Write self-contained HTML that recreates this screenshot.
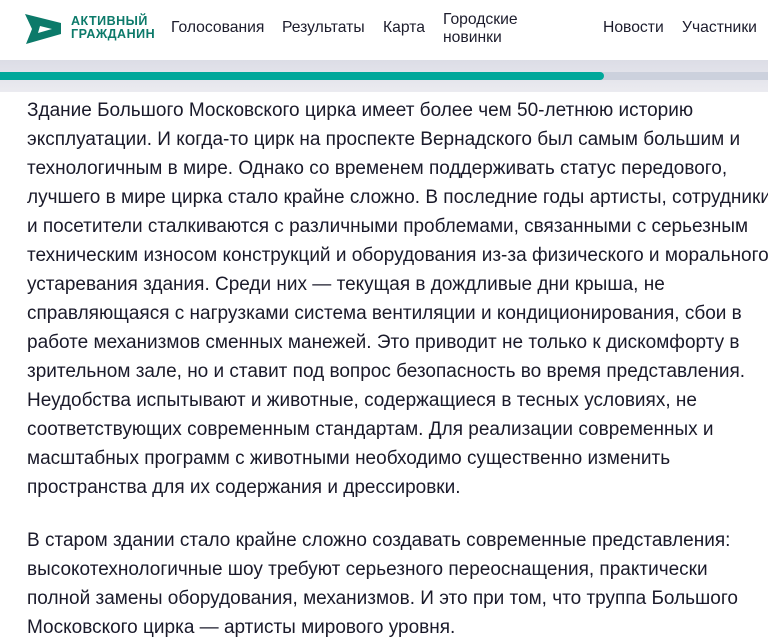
<!DOCTYPE html>
<html><head><meta charset="utf-8"><style>
body{margin:0;width:768px;height:639px;overflow:hidden;background:#fff;font-family:"Liberation Sans",Arial,sans-serif;color:#1c1c2c}
.hdr{position:absolute;left:0;top:0;width:768px;height:60px;background:#fff}
.logo{position:absolute;left:25px;top:14px}
.lt{position:absolute;left:71px;top:15px;font-weight:bold;font-size:12.5px;line-height:13px;color:#0c7a6a;letter-spacing:0.5px}
.nav{position:absolute;top:19px;font-size:15.7px;color:#1c1c2c}
.band{position:absolute;left:0;top:60px;width:768px;height:32px;background:linear-gradient(#dcdde6,#ebebf0)}
.track{position:absolute;left:0;top:72px;width:768px;height:8px;background:#ccd1dd}
.bar{position:absolute;left:0;top:72px;width:604px;height:8px;background:#00a89a;border-radius:0 4px 4px 0}
.txt{position:absolute;left:27px;font-size:19px;line-height:29px;white-space:nowrap;color:#1a1a2a}
</style></head><body>
<div class="hdr">
<svg class="logo" width="38" height="30" viewBox="0 0 38 30"><path d="M0 0 L36 9 L36 20 L1 30 L7 15 Z" fill="#0c7a6a"/><path d="M13 19 L27 15 L15 12 Z" fill="#fff"/></svg>
<div class="lt">АКТИВНЫЙ<br>ГРАЖДАНИН</div>
<div class="nav" style="left:171px">Голосования</div>
<div class="nav" style="left:282px">Результаты</div>
<div class="nav" style="left:383px">Карта</div>
<div class="nav" style="left:443px;top:11px;line-height:18px">Городские<br>новинки</div>
<div class="nav" style="left:603px">Новости</div>
<div class="nav" style="left:682px">Участники</div>
</div>
<div class="band"></div><div class="track"></div><div class="bar"></div>
<div class="txt" style="top:96px">Здание Большого Московского цирка имеет более чем 50-летнюю историю<br>эксплуатации. И когда-то цирк на проспекте Вернадского был самым большим и<br>технологичным в мире. Однако со временем поддерживать статус передового,<br>лучшего в мире цирка стало крайне сложно. В последние годы артисты, сотрудники<br>и посетители сталкиваются с различными проблемами, связанными с серьезным<br>техническим износом конструкций и оборудования из-за физического и морального<br>устаревания здания. Среди них — текущая в дождливые дни крыша, не<br>справляющаяся с нагрузками система вентиляции и кондиционирования, сбои в<br>работе механизмов сменных манежей. Это приводит не только к дискомфорту в<br>зрительном зале, но и ставит под вопрос безопасность во время представления.<br>Неудобства испытывают и животные, содержащиеся в тесных условиях, не<br>соответствующих современным стандартам. Для реализации современных и<br>масштабных программ с животными необходимо существенно изменить<br>пространства для их содержания и дрессировки.</div>
<div class="txt" style="top:526px">В старом здании стало крайне сложно создавать современные представления:<br>высокотехнологичные шоу требуют серьезного переоснащения, практически<br>полной замены оборудования, механизмов. И это при том, что труппа Большого<br>Московского цирка — артисты мирового уровня.</div>
</body></html>
